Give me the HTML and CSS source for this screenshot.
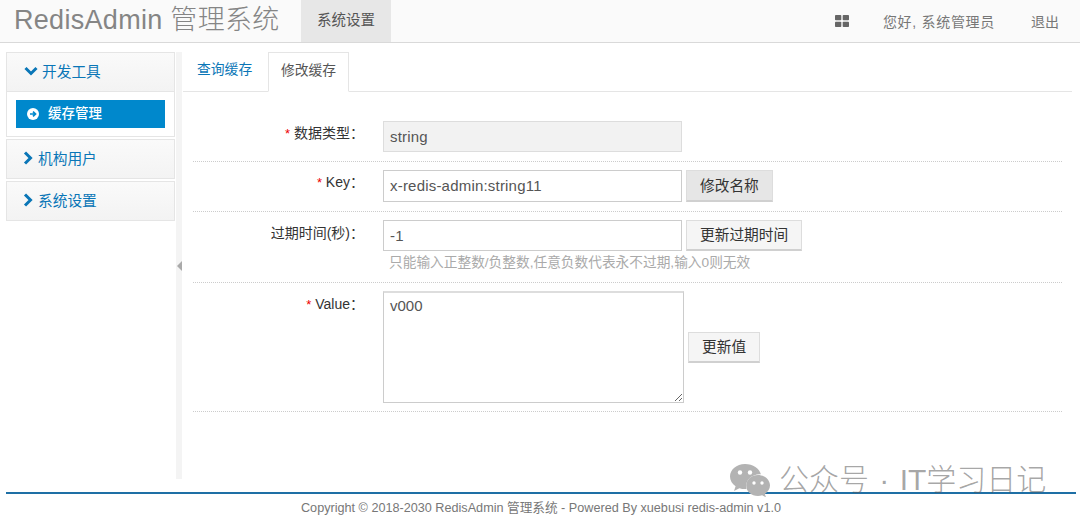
FILE: index.html
```html
<!DOCTYPE html>
<html lang="zh">
<head>
<meta charset="utf-8">
<title>RedisAdmin 管理系统</title>
<link rel="stylesheet" href="styles.css">
</head>
<body>
<header class="topbar">
  <div class="brand">RedisAdmin 管理系统</div>
  <div class="topnav-active">系统设置</div>
  <div class="topright">
    <svg class="grid-icon" viewBox="0 0 14 12" width="14" height="12"><rect x="0" y="0" width="6.3" height="5.2" rx="0.8"/><rect x="7.7" y="0" width="6.3" height="5.2" rx="0.8"/><rect x="0" y="6.8" width="6.3" height="5.2" rx="0.8"/><rect x="7.7" y="6.8" width="6.3" height="5.2" rx="0.8"/></svg>
    <span class="hello">您好, 系统管理员</span>
    <span class="logout">退出</span>
  </div>
</header>
<div class="main">
  <aside class="sidebar">
    <div class="acc-head acc-open">
      <svg class="chev" viewBox="0 0 14 10" width="14" height="10"><path d="M1.5 2 L7 7.5 L12.5 2" /></svg>
      <span>开发工具</span>
    </div>
    <div class="acc-body">
      <div class="acc-item">
        <svg class="circ" viewBox="0 0 12 12" width="12" height="12"><circle cx="6" cy="6" r="6" fill="#fff"/><path d="M3 6 H8.2 M6 3.6 L8.5 6 L6 8.4" fill="none" stroke="#0088cc" stroke-width="1.7"/></svg>
        <span>缓存管理</span>
      </div>
    </div>
    <div class="acc-head acc-closed">
      <svg class="chev-r" viewBox="0 0 10 14" width="10" height="14"><path d="M2 1.5 L7.5 7 L2 12.5" /></svg>
      <span>机构用户</span>
    </div>
    <div class="acc-head acc-closed">
      <svg class="chev-r" viewBox="0 0 10 14" width="10" height="14"><path d="M2 1.5 L7.5 7 L2 12.5" /></svg>
      <span>系统设置</span>
    </div>
  </aside>
  <div class="splitter"><span class="arrow"></span></div>
  <section class="content">
    <nav class="tabs">
      <span class="tab">查询缓存</span>
      <span class="tab tab-active">修改缓存</span>
    </nav>
    <form class="form">
      <div class="row row-type">
        <label class="lbl"><i>*</i> 数据类型：</label>
        <div class="ctl"><div class="input disabled">string</div></div>
      </div>
      <div class="row row-key">
        <label class="lbl"><i>*</i> Key：</label>
        <div class="ctl"><div class="input input-key">x-redis-admin:string11</div><button type="button" class="btn btn-hover">修改名称</button></div>
      </div>
      <div class="row row-exp">
        <label class="lbl">过期时间(秒)：</label>
        <div class="ctl-col">
          <div class="ctl"><div class="input">-1</div><button type="button" class="btn">更新过期时间</button></div>
          <div class="help">只能输入正整数/负整数,任意负数代表永不过期,输入0则无效</div>
        </div>
      </div>
      <div class="row row-val">
        <label class="lbl"><i>*</i> Value：</label>
        <div class="ctl ctl-mid"><textarea class="area" readonly>v000</textarea><button type="button" class="btn btn-val">更新值</button></div>
      </div>
    </form>
  </section>
</div>
<footer class="footer">Copyright © 2018-2030 RedisAdmin 管理系统 - Powered By xuebusi redis-admin v1.0</footer>
<div class="watermark">
  <svg viewBox="0 0 42 34" width="42" height="34">
    <path d="M16 1C7.5 1 1 6.6 1 13.6c0 4 2.1 7.3 5.6 9.7L5 28l5.4-2.8c1.9.5 3.6.9 5.6.9.5 0 1 0 1.5-.1-.3-1-.5-2.100-.5-3.200C17.500 16.300 23.300 11.200 30.500 11.200c.5 0 1 0 1.400.1C30.500 5.300 24 1 16 1z" fill="#b3b3b3"/>
    <circle cx="11" cy="9.500" r="2.200" fill="#fff"/><circle cx="21" cy="9.500" r="2.200" fill="#fff"/>
    <path d="M41 22.500c0-5.900-5.800-10.600-12-10.600-6.600 0-11.800 4.700-11.800 10.600S22.400 33 29 33c1.400 0 2.800-.4 4.100-.7l3.800 2-1-3.300C38.700 29 41 26 41 22.500z" fill="#b3b3b3"/>
    <circle cx="25" cy="20" r="1.700" fill="#fff"/><circle cx="33" cy="20" r="1.700" fill="#fff"/>
  </svg>
  <span class="wm-text">公众号 · IT学习日记</span>
</div>
</body>
</html>
```
FILE: styles.css
```css
* { box-sizing: border-box; }
html, body { margin: 0; padding: 0; }
body {
  width: 1080px; height: 524px; overflow: hidden; position: relative;
  background: #fff; color: #333;
  font-family: "Liberation Sans", "Noto Sans CJK SC", sans-serif;
  font-size: 14px;
}
.topbar {
  height: 43px; display: flex; align-items: stretch;
  background: #fafafa; border-bottom: 1px solid #d9d9d9;
}
.brand {
  width: 301px; padding-left: 14px; font-size: 27px; line-height: 41px;
  color: #858585; letter-spacing: 0.3px; white-space: nowrap; font-weight: 300;
}
.topnav-active {
  width: 90px; background: #e7e7e7; color: #555; text-align: center;
  line-height: 41px; font-size: 14.5px;
}
.topright { margin-left: auto; display: flex; align-items: center; color: #777; font-size: 14px; padding-right: 21px; padding-bottom: 1px; }
.grid-icon { fill: #666; margin-right: 34px; }
.hello { margin-right: 36px; letter-spacing: 0.7px; }
.main { display: flex; height: 436px; padding: 9px 0 0 6px; }
.sidebar { width: 169px; flex: none; }
.acc-head {
  display: flex; align-items: center; color: #0a76b7; font-size: 14.7px;
  background: linear-gradient(#fafafa, #f3f3f3);
  border: 1px solid #e5e5e5; padding-bottom: 3px;
}
.acc-open { height: 40px; padding-left: 17px; gap: 4px; }
.acc-closed { height: 40px; padding-left: 16px; gap: 5px; margin-bottom: 2px; }
.chev, .chev-r { fill: none; stroke: #0a76b7; stroke-width: 3; flex: none; }
.acc-body { height: 45px; padding: 8px 9px; border: 1px solid #e5e5e5; border-top: 0; margin-bottom: 2px; }
.acc-item {
  height: 28px; background: #0088cc; color: #fff; display: flex; align-items: center;
  padding-left: 11px; padding-bottom: 4px; gap: 9px; font-size: 13.5px;
}
.acc-item span { font-weight: 500; }
.acc-item .circ { margin-top: 3px; }
.splitter { width: 6px; flex: none; margin-left: 1px; background: #f4f4f4; height: 427px; position: relative; }
.arrow {
  position: absolute; left: 1px; top: 209px; width: 0; height: 0;
  border-top: 5px solid transparent; border-bottom: 5px solid transparent;
  border-right: 5px solid #aaa;
}
.content { flex: 1; padding-left: 1px; padding-right: 8px; }
.tabs { display: flex; height: 40px; border-bottom: 1px solid #e5e5e5; }
.tab { width: 85px; padding-left: 14px; color: #0a76b7; line-height: 36px; font-size: 13.8px; height: 40px; }
.tab-active {
  width: 81px; padding-left: 0; text-align: center; color: #555; background: #fff;
  border: 1px solid #e5e5e5; border-bottom: 1px solid #fff;
}
.form { padding: 0 10px; }
.row { display: flex; border-bottom: 1px dotted #ccc; align-items: flex-start; }
.row-type { height: 70px; padding-top: 29px; }
.row-key { height: 50px; padding-top: 8px; }
.row-exp { height: 71px; padding-top: 8px; }
.row-val { height: 129px; padding-top: 8px; }
.lbl { width: 190px; flex: none; text-align: right; padding-right: 19px; line-height: 25px; color: #333; font-size: 14px; }
.row-exp .lbl, .row-val .lbl { margin-top: 1px; }
.lbl i { color: #e00; font-style: normal; font-size: 13px; }
.ctl { display: flex; align-items: flex-start; gap: 4px; }
.ctl-mid { align-items: center; height: 112px; gap: 4px; }
.input {
  width: 299px; height: 31px; border: 1px solid #ccc;
  padding: 0 6px; line-height: 30px; color: #555; font-size: 15px; letter-spacing: 0.2px;
}
.input-key { height: 32px; }
.disabled { background: #f2f2f2; border-color: #ddd; }
.btn {
  height: 31px; padding: 0 13px; background: #f5f5f5; border: 1px solid #ddd; border-bottom: 2px solid #d0d0d0;
  color: #333; font: 14.7px "Liberation Sans", "Noto Sans CJK SC", sans-serif; line-height: 28px;
}
.btn-hover { background: #e6e6e6; height: 32px; }
.help { color: #aaa; font-size: 13.7px; padding-left: 6px; line-height: 22px; margin-top: 1px; }
.area {
  display: block; width: 301px; height: 112px; border: 1px solid #ccc; border-top: 2px solid #ddd;
  padding: 4px 6px; font: 15px/17px "Liberation Sans", "Noto Sans CJK SC", sans-serif; color: #555; resize: both; outline: 0;
}
.footer {
  position: absolute; left: 6px; width: 1070px; top: 492px; height: 32px;
  border-top: 2px solid #1e6fa5; text-align: center; color: #777; font-size: 12.65px; line-height: 29px;
}
.watermark {
  position: absolute; left: 729px; top: 463px; display: flex; align-items: center; gap: 8px;
  color: rgba(90,90,90,0.55); white-space: nowrap;
}
.wm-text { font-size: 30px; line-height: 34px; font-weight: 300; word-spacing: 2px; margin-top: -1px; }
```
